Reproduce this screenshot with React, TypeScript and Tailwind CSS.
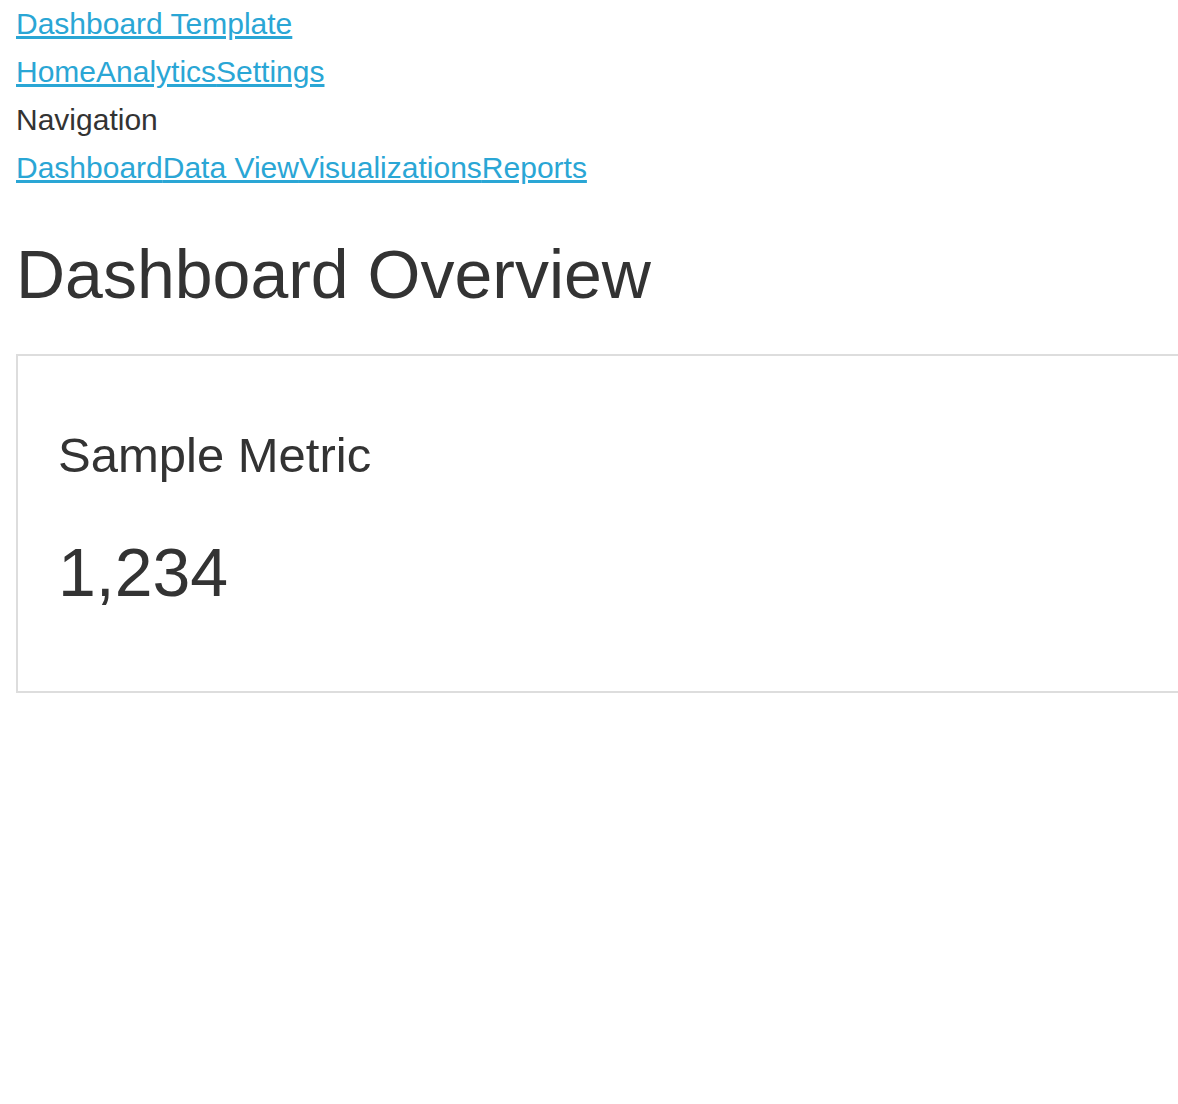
export default function App() {
  const topLinks = ["Home", "Analytics", "Settings"];
  const navLinks = ["Dashboard", "Data View", "Visualizations", "Reports"];

  return (
    <div
      className="min-h-screen w-full overflow-hidden bg-white pl-4 text-[#333333]"
      style={{ fontFamily: '"Liberation Sans", Arial, sans-serif' }}
    >
      {/* header */}
      <div className="text-[30px] leading-[48px]">
        <div>
          <a href="#" className="text-[#2aa6d5] underline">
            Dashboard Template
          </a>
        </div>
        <div>
          {topLinks.map((l) => (
            <a key={l} href="#" className="text-[#2aa6d5] underline">
              {l}
            </a>
          ))}
        </div>
        <div>Navigation</div>
        <div>
          {navLinks.map((l) => (
            <a key={l} href="#" className="text-[#2aa6d5] underline">
              {l}
            </a>
          ))}
        </div>
      </div>

      {/* main */}
      <h1 className="mt-[45px] text-[68px] leading-[1.1] font-normal">
        Dashboard Overview
      </h1>

      <div className="mt-[42px] w-[1240px] border-2 border-[#dddddd] pl-10 pt-[70px] pb-[78px]">
        <h3 className="text-[49px] leading-[1.2] font-normal">Sample Metric</h3>
        <p className="mt-[47px] text-[68px] leading-[1.2]">1,234</p>
      </div>
    </div>
  );
}
